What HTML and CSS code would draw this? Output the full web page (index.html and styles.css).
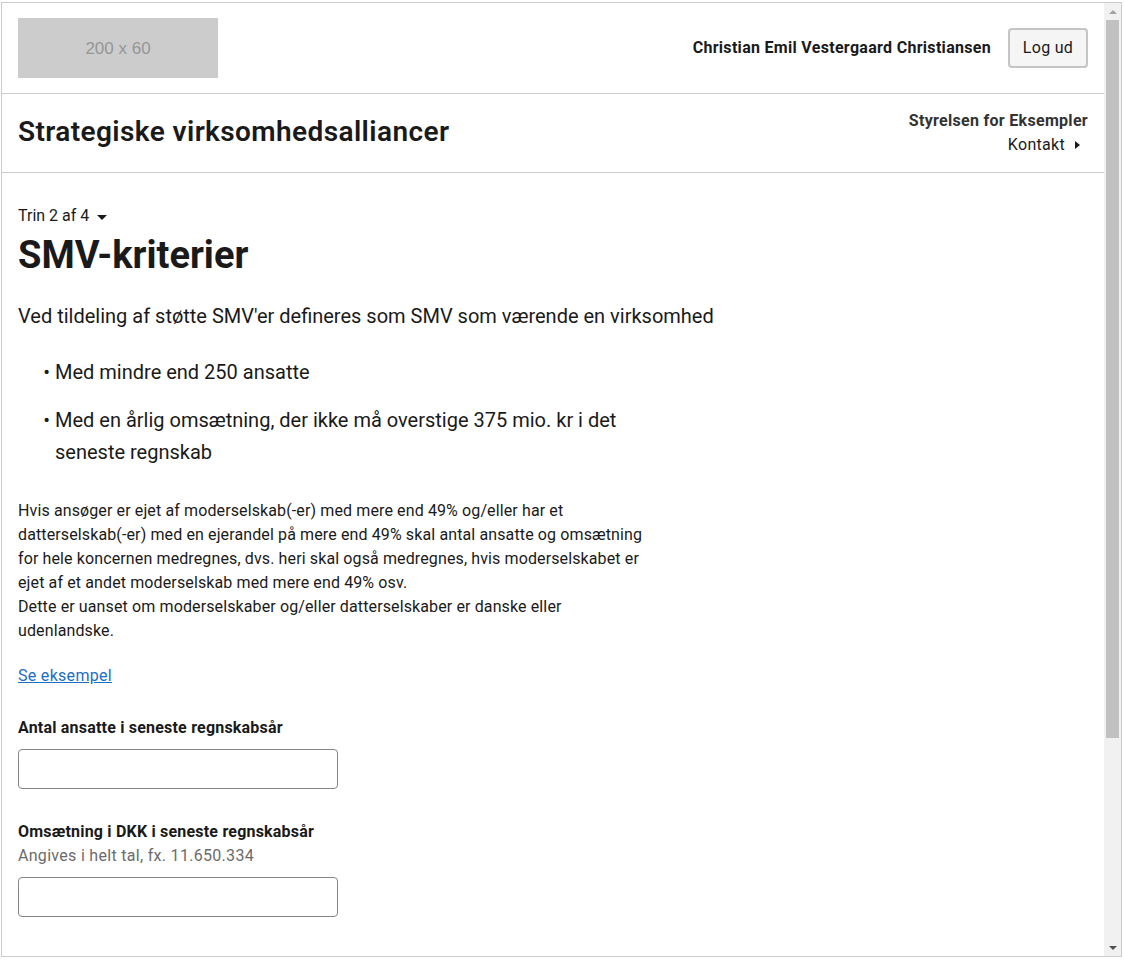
FILE: index.html
```html
<!DOCTYPE html>
<html lang="da">
<head>
<meta charset="utf-8">
<title>SMV-kriterier</title>
<link rel="stylesheet" href="styles.css">
</head>
<body>
<div class="frame">
  <div class="page">
    <header class="header">
      <div class="logo">200 x 60</div>
      <div class="user">
        <span class="user-name">Christian Emil Vestergaard Christiansen</span>
        <button class="btn" type="button">Log ud</button>
      </div>
    </header>
    <div class="portal">
      <div class="service-title">Strategiske virksomhedsalliancer</div>
      <div class="authority">
        <div class="authority-name">Styrelsen for Eksempler</div>
        <a class="contact" href="#">Kontakt<svg class="contact-icon" width="14" height="16" viewBox="0 0 14 16"><path d="M1 4 L6 8 L1 12 Z" fill="#1a1a1a"/></svg></a>
      </div>
    </div>
    <main class="main">
      <div class="step">Trin 2 af 4<svg class="step-caret" width="20" height="16" viewBox="0 0 20 16"><path d="M5 7 L15 7 L10 12 Z" fill="#1a1a1a"/></svg></div>
      <h1 class="title">SMV-kriterier</h1>
      <p class="lead">Ved tildeling af støtte SMV'er defineres som SMV som værende en virksomhed</p>
      <div class="content">
        <ul class="criteria">
          <li>Med mindre end 250 ansatte</li>
          <li>Med en årlig omsætning, der ikke må overstige 375 mio. kr i det seneste regnskab</li>
        </ul>
        <p class="info">Hvis ansøger er ejet af moderselskab(-er) med mere end 49% og/eller har et datterselskab(-er) med en ejerandel på mere end 49% skal antal ansatte og omsætning for hele koncernen medregnes, dvs. heri skal også medregnes, hvis moderselskabet er ejet af et andet moderselskab med mere end 49% osv.<br>Dette er uanset om moderselskaber og/eller datterselskaber er danske eller udenlandske.</p>
        <p class="example"><a class="link" href="#">Se eksempel</a></p>
      </div>
      <div class="field">
        <label class="label" for="ansatte">Antal ansatte i seneste regnskabsår</label>
        <input class="input" id="ansatte" type="text">
      </div>
      <div class="field">
        <label class="label" for="omsaetning">Omsætning i DKK i seneste regnskabsår</label>
        <span class="hint">Angives i helt tal, fx. 11.650.334</span>
        <input class="input" id="omsaetning" type="text">
      </div>
    </main>
  </div>
  <div class="scrollbar">
    <div class="sb-btn"><span class="arrow-up"></span></div>
    <div class="sb-track"><div class="sb-thumb"></div></div>
    <div class="sb-btn"><span class="arrow-down"></span></div>
  </div>
</div>
</body>
</html>
```

FILE: styles.css
```css
* { box-sizing: border-box; }

html, body {
  margin: 0;
  padding: 0;
  background: #ffffff;
}

body {
  font-family: Roboto, "Noto Sans", Arial, sans-serif;
  color: #1a1a1a;
  font-size: 16px;
  line-height: 24px;
  letter-spacing: 0.3px;
}

.frame {
  margin: 2px 0 0 1px;
  width: 1121px;
  height: 955px;
  border: 1px solid #cccccc;
  display: flex;
  overflow: hidden;
}

.page {
  flex: 1;
  min-width: 0;
  overflow: hidden;
}

/* Header */
.header {
  display: flex;
  justify-content: space-between;
  align-items: center;
  padding: 15px 16px;
  border-bottom: 1px solid #cccccc;
}

.logo {
  width: 200px;
  height: 60px;
  background: #cccccc;
  color: #969696;
  font-family: "Liberation Sans", Arial, sans-serif;
  font-size: 17px;
  letter-spacing: 0;
  display: flex;
  align-items: center;
  justify-content: center;
  padding-top: 1px;
}

.user {
  display: flex;
  align-items: center;
  gap: 17px;
}

.user-name {
  font-weight: 700;
  font-size: 16px;
}

.btn {
  width: 80px;
  height: 40px;
  font-family: inherit;
  font-size: 16px;
  letter-spacing: 0.3px;
  color: #1a1a1a;
  background: #f5f5f5;
  border: 2px solid #c4c4c4;
  border-radius: 4px;
  padding: 0 0 2px;
}

/* Portal info */
.portal {
  display: flex;
  justify-content: space-between;
  align-items: center;
  padding: 15px 16px;
  border-bottom: 1px solid #cccccc;
}

.service-title {
  font-size: 28px;
  font-weight: 600;
  line-height: 36px;
  letter-spacing: 0.4px;
  margin-top: -2px;
}

.authority {
  text-align: right;
}

.authority-name {
  font-weight: 700;
  color: #333333;
}

.contact {
  color: #1a1a1a;
  text-decoration: none;
  display: inline-flex;
  align-items: center;
}

.contact-icon {
  margin-left: 9px;
}

/* Main */
.main {
  padding: 30px 16px 0;
}

.step {
  display: flex;
  align-items: center;
  line-height: 24px;
  letter-spacing: 0;
  margin-top: 1px;
}

.step-caret {
  margin-left: 3px;
}

.title {
  margin: 3px 0 0;
  font-size: 38px;
  line-height: 48px;
  font-weight: 700;
  letter-spacing: 0;
}

.lead {
  margin: 21px 0 0;
  font-size: 20px;
  line-height: 32px;
  letter-spacing: 0;
}

.content {
  max-width: 636px;
}

.criteria {
  margin: 24px 0 0;
  padding: 0 0 0 37px;
  list-style-type: "• ";
  font-size: 20px;
  line-height: 32px;
  letter-spacing: 0;
}

.criteria li + li {
  margin-top: 16px;
}

.info {
  margin: 31px 0 0;
  letter-spacing: 0.12px;
}

.example {
  margin: 21px 0 0;
}

.link {
  color: #1b6ec2;
  text-decoration: underline;
}

.field {
  display: flex;
  flex-direction: column;
  align-items: flex-start;
  margin-top: 28px;
}

.field + .field {
  margin-top: 31px;
}

.label {
  font-weight: 700;
  letter-spacing: 0.2px;
}

.hint {
  color: #6b6b6b;
}

.input {
  width: 320px;
  height: 40px;
  margin-top: 9px;
  border: 1px solid #858585;
  border-radius: 4px;
  background: #ffffff;
}

/* Scrollbar */
.scrollbar {
  width: 17px;
  flex: none;
  background: #f1f1f1;
  display: flex;
  flex-direction: column;
}

.sb-btn {
  height: 17px;
  display: flex;
  align-items: center;
  justify-content: center;
}

.arrow-up {
  width: 0;
  height: 0;
  border-left: 4px solid transparent;
  border-right: 4px solid transparent;
  border-bottom: 4px solid #a3a3a3;
}

.arrow-down {
  width: 0;
  height: 0;
  border-left: 4px solid transparent;
  border-right: 4px solid transparent;
  border-top: 4px solid #505050;
}

.sb-track {
  flex: 1;
  padding: 0 2px;
}

.sb-thumb {
  height: 718px;
  background: #c1c1c1;
}
```
